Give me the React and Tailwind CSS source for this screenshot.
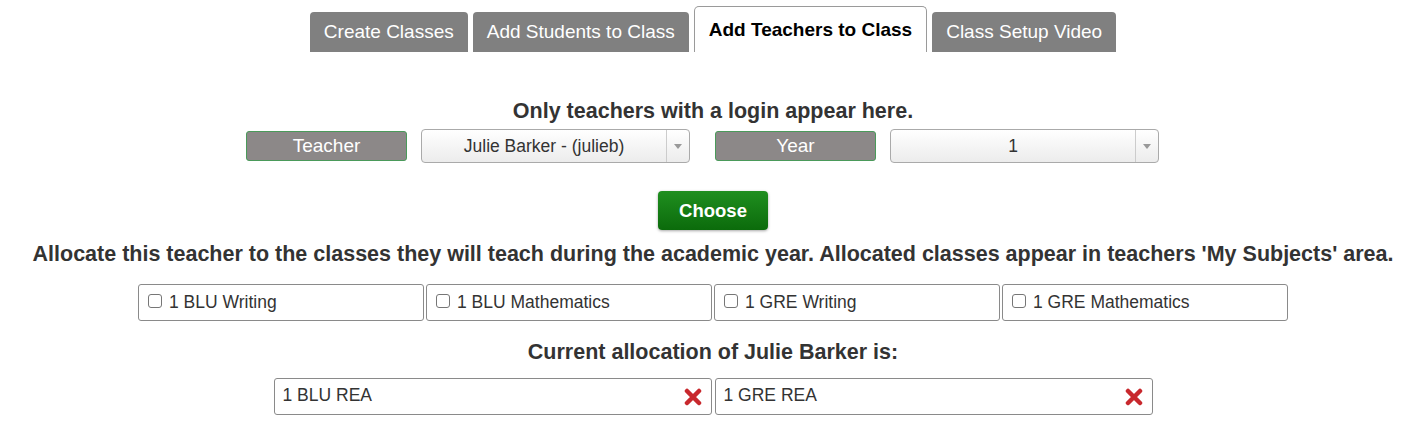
import React from "react";

const font = { fontFamily: '"Liberation Sans", Arial, sans-serif' };

function Tab({ label, active }) {
  if (active) {
    return (
      <div className="h-[46px] px-[14px] flex items-center bg-white border border-[#9a9a9a] border-b-0 rounded-t-[5px] text-[19px] font-bold text-black pt-[2px]">
        {label}
      </div>
    );
  }
  return (
    <div className="h-[40px] px-[14px] flex items-center bg-[#808080] rounded-t-[4px] text-[19px] text-white">
      {label}
    </div>
  );
}

function Label({ children }) {
  return (
    <div className="w-[161px] h-[30px] flex items-center justify-center bg-[#8c8888] border border-[#4a9a5a] rounded-[3px] text-white text-[19px]">
      {children}
    </div>
  );
}

function Select({ value }) {
  return (
    <div className="w-[269px] h-[34px] flex bg-gradient-to-b from-white to-[#ececec] border border-[#aaaaaa] rounded-[4px] text-[17.5px] text-[#333]">
      <div className="flex-1 flex items-center justify-center">{value}</div>
      <div className="w-[23px] border-l border-[#cccccc] flex items-center justify-center">
        <svg width="8" height="5" viewBox="0 0 8 5">
          <path d="M0 0 L8 0 L4 5 Z" fill="#999" />
        </svg>
      </div>
    </div>
  );
}

function Check({ label }) {
  return (
    <div className="w-[286px] h-[37px] border border-[#8a8a8a] rounded-[3px] flex items-center pl-[9px] text-[17.5px] text-[#333]">
      <span className="w-[14px] h-[14px] border border-[#767676] rounded-[3px] bg-white mr-[7px] -mt-[4px]" />
      {label}
    </div>
  );
}

function RedX() {
  return (
    <svg width="18" height="18" viewBox="0 0 18 18">
      <path d="M3 3 L15 15 M15 3 L3 15" stroke="#c8282d" strokeWidth="4.5" strokeLinecap="round" />
    </svg>
  );
}

function Alloc({ label }) {
  return (
    <div className="w-[438px] h-[37px] border border-[#8a8a8a] rounded-[3px] flex items-center pl-[8px] pr-[9px] text-[17.5px] text-[#333]">
      <span className="flex-1 -mt-[2px]">{label}</span>
      <RedX />
    </div>
  );
}

export default function App() {
  return (
    <div className="w-[1426px] h-[436px] bg-white overflow-hidden" style={font}>
      <div className="flex justify-center items-end gap-[5px] pt-[6px] h-[52px]">
        <Tab label="Create Classes" />
        <Tab label="Add Students to Class" />
        <Tab label="Add Teachers to Class" active />
        <Tab label="Class Setup Video" />
      </div>

      <div className="mt-[47px] text-center text-[21.5px] font-bold text-[#333] leading-[24px]">
        Only teachers with a login appear here.
      </div>

      <div className="mt-[6px] flex justify-center items-center pr-[21px]">
        <Label>Teacher</Label>
        <div className="w-[14px]" />
        <Select value="Julie Barker - (julieb)" />
        <div className="w-[25px]" />
        <Label>Year</Label>
        <div className="w-[14px]" />
        <Select value="1" />
      </div>

      <div className="mt-[28px] flex justify-center">
        <div className="w-[110px] h-[39px] flex items-center justify-center rounded-[4px] bg-gradient-to-b from-[#1f8f1f] to-[#0b6b0b] text-white font-bold text-[18.5px] shadow-[0_1px_3px_rgba(0,0,0,0.35)]">
          Choose
        </div>
      </div>

      <div className="mt-[12px] text-center text-[21.5px] font-bold text-[#333] leading-[24px] whitespace-nowrap">
        Allocate this teacher to the classes they will teach during the academic year. Allocated classes appear in teachers 'My Subjects' area.
      </div>

      <div className="mt-[18px] flex justify-center gap-[2px]">
        <Check label="1 BLU Writing" />
        <Check label="1 BLU Mathematics" />
        <Check label="1 GRE Writing" />
        <Check label="1 GRE Mathematics" />
      </div>

      <div className="mt-[19px] text-center text-[21.5px] font-bold text-[#333] leading-[24px]">
        Current allocation of Julie Barker is:
      </div>

      <div className="mt-[14px] flex justify-center gap-[3px]">
        <Alloc label="1 BLU REA" />
        <Alloc label="1 GRE REA" />
      </div>
    </div>
  );
}
